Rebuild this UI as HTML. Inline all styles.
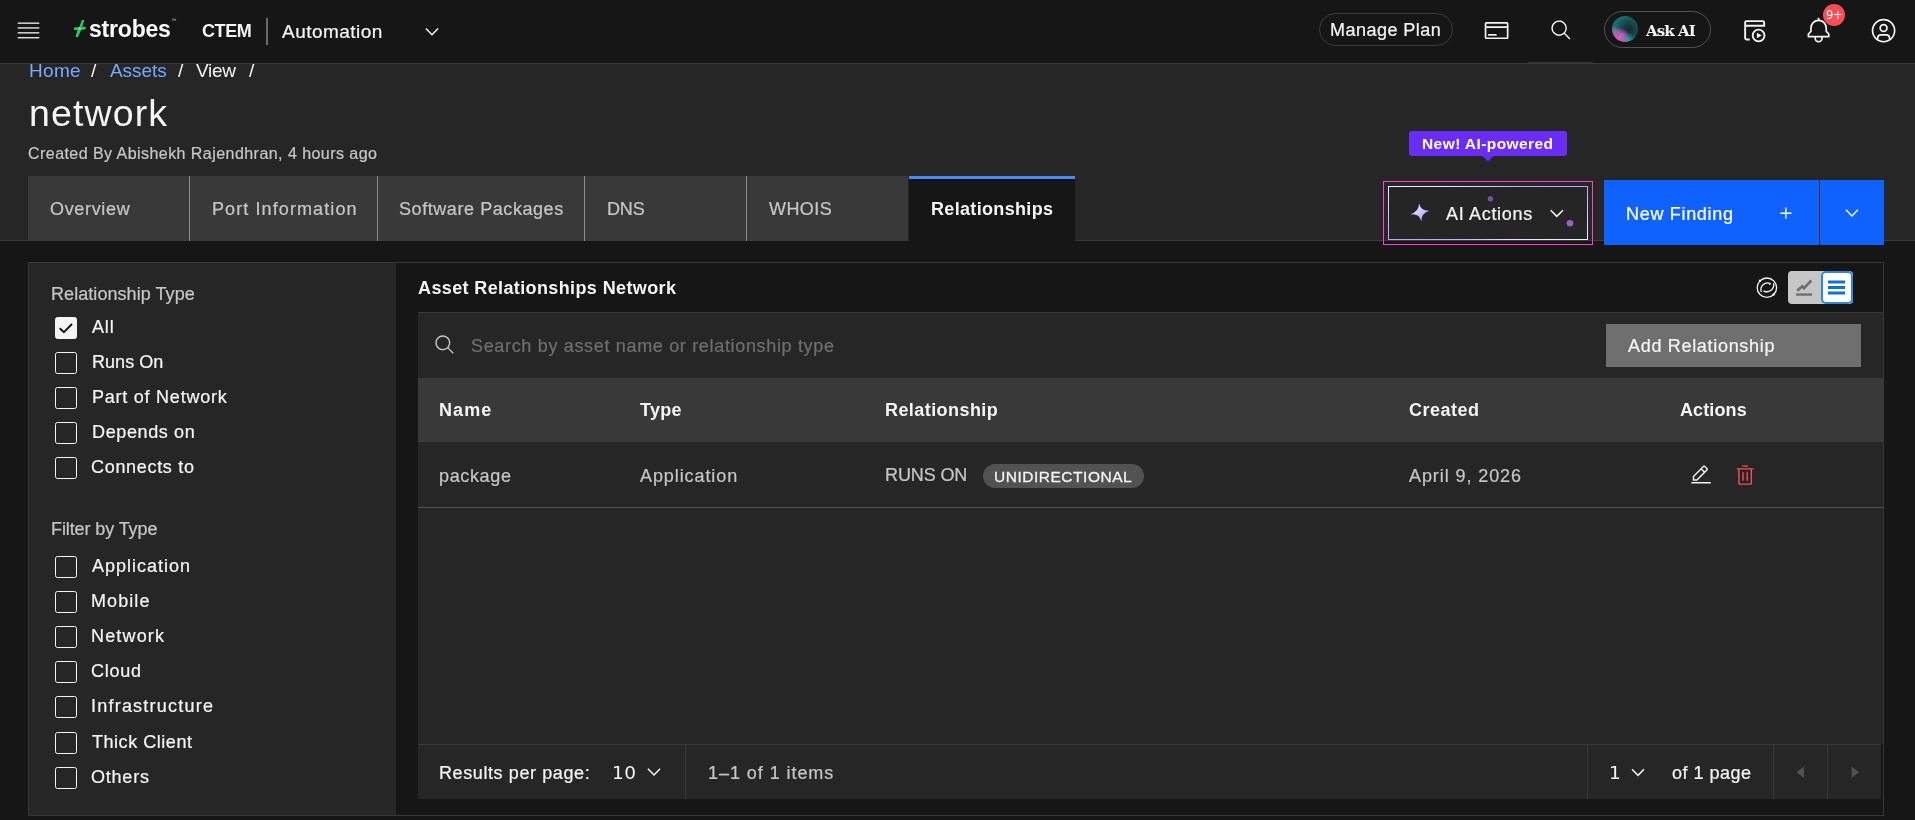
<!DOCTYPE html>
<html lang="en">
<head>
<meta charset="utf-8">
<title>network - Assets - Strobes CTEM</title>
<style>
*{box-sizing:border-box;margin:0;padding:0}
html,body{width:1915px;height:820px;overflow:hidden;background:#161616}
body{position:relative;font-family:"Liberation Sans",sans-serif;color:#f4f4f4}
.a{position:absolute}
.t{position:absolute;white-space:pre;line-height:24px;height:24px;font-family:"Liberation Sans",sans-serif}
svg{position:absolute;overflow:visible}
.s{-webkit-text-stroke:0.22px currentColor}
.cb{position:absolute;left:55px;width:22px;height:22px;border:1px solid #f4f4f4;border-radius:2.5px}
</style>
</head>
<body>
<!-- ===== header ===== -->
<div class="a" style="left:0;top:0;width:1915px;height:63px;background:#161616"></div>
<div class="a" style="left:0;top:63px;width:1915px;height:1px;background:#393939"></div>
<div class="a" style="left:1528px;top:62px;width:65px;height:2px;background:#393939"></div>
<!-- hamburger -->
<svg style="left:0;top:0" width="60" height="62" viewBox="0 0 60 62"><g fill="#f4f4f4"><rect x="17.7" y="22.5" width="21.6" height="1.3"/><rect x="17.7" y="27.3" width="21.6" height="1.3"/><rect x="17.7" y="32.2" width="21.6" height="1.3"/><rect x="17.7" y="37.1" width="21.6" height="1.3"/></g></svg>
<!-- logo bolt -->
<svg style="left:70px;top:16px" width="20" height="26" viewBox="70 16 20 26"><polygon fill="#31c65b" points="81.9,19.87 84.25,20.15 82.19,26.73 85.76,26.92 85.48,29.36 81.15,29.93 77.86,37.26 75.51,36.88 77.49,30.11 73.92,29.93 74.1,27.48 79.37,26.92"/><circle cx="79.6" cy="28.4" r="0.9" fill="#d9ffe3"/></svg>
<div class="t" style="left:171.2px;top:8px;font-size:5px;color:#c6c6c6">™</div>
<!-- divider -->
<div class="a" style="left:266px;top:18px;width:2px;height:27px;background:#6a6a6a"></div>
<!-- chevron automation -->
<svg style="left:420px;top:22px" width="24" height="20" viewBox="420 22 24 20"><polyline points="425.9,28.4 432,34.7 438.1,28.4" fill="none" stroke="#f4f4f4" stroke-width="1.5"/></svg>
<!-- manage plan pill -->
<div class="a" style="left:1319px;top:13px;width:134px;height:33px;border:1px solid #3d3d3d;border-radius:17px"></div>
<!-- purchase icon -->
<svg style="left:1482.9px;top:16.9px" width="27.2" height="27.2" viewBox="0 0 32 32" fill="#f4f4f4"><path d="M28 6H4a2 2 0 00-2 2v16a2 2 0 002 2h24a2 2 0 002-2V8a2 2 0 00-2-2zm0 2v3H4V8zM4 24V13h24v11z"/><path d="M6 20h10v2H6z"/></svg>
<!-- search icon -->
<svg style="left:1549.6px;top:19.2px" width="22.5" height="22.5" viewBox="0 0 32 32" fill="#f4f4f4"><path d="M29 27.586l-7.552-7.552a11.018 11.018 0 10-1.414 1.414L27.586 29zM4 13a9 9 0 119 9 9.01 9.01 0 01-9-9z"/></svg>
<!-- ask ai pill -->
<div class="a" style="left:1604px;top:11px;width:107px;height:37px;border:1px solid #525252;border-radius:19px"></div>
<div class="a" style="left:1611.6px;top:15.6px;width:26.3px;height:26.3px;border-radius:50%;background:radial-gradient(circle at 28% 84%,#cf5fc8 0,#b45cb6 16%,rgba(150,90,170,0) 36%),radial-gradient(circle at 8% 62%,rgba(160,140,165,.8) 0,rgba(160,140,165,0) 22%),radial-gradient(circle at 58% 95%,#22b0b0 0,rgba(31,150,150,0) 30%),radial-gradient(circle at 66% 52%,#16282a 0,#17484a 35%,#176a6a 62%,#178080 100%)"></div>
<!-- calendar/play icon -->
<svg style="left:1740px;top:16px" width="30" height="30" viewBox="1740 16 30 30" fill="none" stroke="#f4f4f4" stroke-width="1.9"><path d="M1749.700 39.500H1746.600a1.450 1.450 0 01-1.450-1.450V22.550a1.450 1.450 0 011.450-1.450H1762.700a1.450 1.450 0 011.450 1.450V25.800H1745.150"/><circle cx="1758.600" cy="35.500" r="5.900"/><path d="M1756.900 32.800V38.300L1761.800 35.550z" fill="#f4f4f4" stroke="none"/></svg>
<!-- bell -->
<svg style="left:1805.05px;top:16.85px" width="27.2" height="27.2" viewBox="0 0 32 32" fill="#f4f4f4"><path d="M28.707 19.293L26 16.586V13a10.014 10.014 0 00-9-9.95V1h-2v2.05A10.014 10.014 0 006 13v3.586l-2.707 2.707A1 1 0 003 20v3a1 1 0 001 1h7v.777a5.152 5.152 0 004.5 5.199A5.006 5.006 0 0021 25v-1h7a1 1 0 001-1v-3a1 1 0 00-.293-.707zM19 25a3 3 0 01-6 0v-1h6zm8-3H5v-1.586l2.707-2.707A1 1 0 008 17v-4a8 8 0 0116 0v4a1 1 0 00.293.707L27 20.414z"/></svg>
<div class="a" style="left:1822.9px;top:3.9px;width:22.2px;height:22.2px;border-radius:50%;background:#fa4d56"></div>
<!-- user avatar -->
<svg style="left:1870px;top:17.3px" width="27.2" height="27.2" viewBox="0 0 32 32" fill="#f4f4f4"><path d="M16 8a5 5 0 105 5 5 5 0 00-5-5zm0 8a3 3 0 113-3 3.003 3.003 0 01-3 3z"/><path d="M16 2a14 14 0 1014 14A14.016 14.016 0 0016 2zm-6 24.377V25a3.003 3.003 0 013-3h6a3.003 3.003 0 013 3v1.377a11.899 11.899 0 01-12 0zm13.993-1.451A5.002 5.002 0 0019 20h-6a5.002 5.002 0 00-4.992 4.926 12 12 0 1115.985 0z"/></svg>

<!-- ===== page header band ===== -->
<div class="a" style="left:0;top:64px;width:1915px;height:177px;background:#262626"></div>
<div class="a" style="left:0;top:240px;width:1915px;height:1px;background:#393939"></div>
<!-- tabs -->
<div class="a" style="left:28px;top:176px;width:880px;height:65px;background:#393939"></div>
<div class="a" style="left:189px;top:176px;width:1px;height:65px;background:#8d8d8d"></div>
<div class="a" style="left:377px;top:176px;width:1px;height:65px;background:#8d8d8d"></div>
<div class="a" style="left:584px;top:176px;width:1px;height:65px;background:#8d8d8d"></div>
<div class="a" style="left:746px;top:176px;width:1px;height:65px;background:#8d8d8d"></div>
<div class="a" style="left:909px;top:176px;width:166px;height:65px;background:#161616;border-top:3px solid #4589ff"></div>
<!-- tooltip -->
<div class="a" style="left:1409px;top:131px;width:158px;height:25px;background:#6a2df5;border-radius:3px"></div>
<svg style="left:1480px;top:155px" width="16" height="8" viewBox="1480 155 16 8"><polygon points="1482,155.5 1494,155.5 1488,161.6" fill="#6a2df5"/></svg>
<!-- AI actions -->
<div class="a" style="left:1383px;top:181px;width:210px;height:64px;border:1px solid #ff3dd9"></div>
<div class="a" style="left:1388px;top:186px;width:200px;height:54px;background:conic-gradient(from 285deg,#f4eeff 0deg,#c3a0fb 150deg,#f4eeff 180deg,#c3a0fb 330deg,#f4eeff 360deg)"></div>
<div class="a" style="left:1389.2px;top:187.2px;width:197.6px;height:51.6px;background:#252525"></div>
<svg style="left:1405px;top:195px" width="180" height="36" viewBox="1405 195 180 36">
<defs><linearGradient id="sp" x1="0" y1="0" x2="1" y2="1"><stop offset="0.15" stop-color="#f1e6ff"/><stop offset="0.85" stop-color="#b59aff"/></linearGradient></defs>
<path fill="url(#sp)" d="M1419 203.500Q1421.100 211.200 1429.600 210.700Q1421.100 213 1421.500 221.600Q1419.300 213 1410.200 214.400Q1419.300 211.200 1419 203.500z"/>
<circle cx="1490.5" cy="198.8" r="2.7" fill="#7a4ea3"/>
<circle cx="1570" cy="223.2" r="3.3" fill="#9860c6"/>
<polyline points="1550.7,210.3 1556.8,216.4 1562.9,210.3" fill="none" stroke="#f4f4f4" stroke-width="1.5"/>
</svg>
<!-- New finding -->
<div class="a" style="left:1604px;top:180px;width:215px;height:65px;background:#0f62fe"></div>
<div class="a" style="left:1820px;top:180px;width:64px;height:65px;background:#0f62fe"></div>
<svg style="left:1775px;top:200px" width="100" height="26" viewBox="1775 200 100 26" fill="none" stroke="#ffffff" stroke-width="1.4"><path d="M1780.3 213.2h11.2M1785.9 207.6v11.2"/><polyline points="1845.9,209.7 1851.9,216 1857.9,209.7"/></svg>

<!-- ===== content panel ===== -->
<div class="a" style="left:28px;top:262px;width:1856px;height:554px;border:1px solid #393939;background:#161616"></div>
<div class="a" style="left:29px;top:263px;width:367px;height:552px;background:#262626"></div>
<!-- checkboxes -->
<div class="cb" style="top:317px;background:#f4f4f4"></div>
<svg style="left:55px;top:317px" width="22" height="22" viewBox="0 0 22 22"><polyline points="4.700,11.200 8.900,15.200 17,7" fill="none" stroke="#161616" stroke-width="2"/></svg>
<div class="cb" style="top:352px"></div>
<div class="cb" style="top:387px"></div>
<div class="cb" style="top:422px"></div>
<div class="cb" style="top:457px"></div>
<div class="cb" style="top:556px"></div>
<div class="cb" style="top:591px"></div>
<div class="cb" style="top:626px"></div>
<div class="cb" style="top:661px"></div>
<div class="cb" style="top:696px"></div>
<div class="cb" style="top:732px"></div>
<div class="cb" style="top:767px"></div>

<!-- main icons top-right -->
<svg style="left:1752px;top:272px" width="30" height="30" viewBox="1752 272 30 30" fill="none" stroke="#f4f4f4" stroke-width="1.3"><circle cx="1766.9" cy="287.7" r="9.7"/><path d="M1761.400 292A6.600 6.600 0 011770.400 283.600M1764.400 291.300A7 7 0 001773.600 283.200"/><g fill="#f4f4f4" stroke="none"><circle cx="1760" cy="280.800" r="1.200"/><circle cx="1773.600" cy="294.400" r="1.200"/><circle cx="1764.200" cy="291.300" r="0.900"/><circle cx="1769.800" cy="284" r="0.900"/></g></svg>
<div class="a" style="left:1788px;top:271px;width:65px;height:33px;background:#c6c6c6;border-radius:4px"></div>
<div class="a" style="left:1820.500px;top:271px;width:32.500px;height:33px;background:#ffffff;border:2px solid #2d86e6;border-radius:5px"></div>
<svg style="left:1790px;top:274px" width="62" height="28" viewBox="1790 274 62 28" fill="none"><polyline points="1797.200,290.600 1802.300,286.300 1804,288.200 1811.400,280.400" stroke="#6f6f6f" stroke-width="2.700"/><path d="M1796.100 294.550h15.900" stroke="#6f6f6f" stroke-width="2.400"/><path d="M1828 282.050h17M1828 287.500h17M1828 293.050h17" stroke="#1170d8" stroke-width="2.900"/></svg>

<!-- toolbar -->
<div class="a" style="left:418px;top:312px;width:1465px;height:66px;background:#262626;border-top:1px solid #393939"></div>
<svg style="left:434.2px;top:334.2px" width="21.8" height="21.8" viewBox="0 0 32 32" fill="#c6c6c6"><path d="M29 27.586l-7.552-7.552a11.018 11.018 0 10-1.414 1.414L27.586 29zM4 13a9 9 0 119 9 9.01 9.01 0 01-9-9z"/></svg>
<div class="a" style="left:1606px;top:324px;width:255px;height:43px;background:#6f6f6f"></div>
<!-- table -->
<div class="a" style="left:418px;top:378px;width:1465px;height:64px;background:#393939"></div>
<div class="a" style="left:418px;top:442px;width:1465px;height:357px;background:#262626"></div>
<div class="a" style="left:418px;top:507px;width:1465px;height:1px;background:#525252"></div>
<div class="a" style="left:983px;top:464px;width:161px;height:24px;background:#525252;border-radius:12px"></div>
<svg style="left:1689.6px;top:463.8px" width="22.2" height="22.2" viewBox="0 0 32 32" fill="#f4f4f4"><path d="M2 26h28v2H2zM25.4 9c.8-.8.8-2 0-2.800l-3.600-3.600c-.8-.8-2-.8-2.800 0l-15 15V24h6.400l15-15zm-5-5L24 7.600l-3 3L17.400 7l3-3zM6 22v-3.600l10-10 3.600 3.600-10 10H6z"/></svg>
<svg style="left:1733.8px;top:463.6px" width="22.2" height="22.2" viewBox="0 0 32 32" fill="#fa4d56"><path d="M12 12h2v12h-2zM18 12h2v12h-2z"/><path d="M4 6v2h2v20a2 2 0 002 2h16a2 2 0 002-2V8h2V6zm4 22V8h16v20zM12 2h8v2h-8z"/></svg>
<!-- pagination -->
<div class="a" style="left:1881px;top:744px;width:2px;height:55px;background:#161616"></div>
<div class="a" style="left:418px;top:744px;width:1463px;height:1px;background:#393939"></div>
<div class="a" style="left:418px;top:799px;width:1465px;height:16px;background:#161616"></div>
<div class="a" style="left:685px;top:745px;width:1px;height:54px;background:#393939"></div>
<div class="a" style="left:1587px;top:745px;width:1px;height:54px;background:#393939"></div>
<div class="a" style="left:1773px;top:745px;width:1px;height:54px;background:#393939"></div>
<div class="a" style="left:1827px;top:745px;width:1px;height:54px;background:#393939"></div>
<svg style="left:640px;top:760px" width="1230" height="24" viewBox="640 760 1230 24"><polyline points="647.900,768.700 654,775 660.100,768.700" fill="none" stroke="#f4f4f4" stroke-width="1.5"/><polyline points="1632,769.300 1638,775.400 1644,769.300" fill="none" stroke="#f4f4f4" stroke-width="1.5"/><polygon points="1804,766.400 1804,778 1796.600,772.200" fill="#525252"/><polygon points="1851.600,766.400 1851.600,778 1859,772.200" fill="#525252"/></svg>

<!-- ===== texts ===== -->
<div class="a" style="left:0;top:0;width:1915px;height:820px;will-change:transform">
<div class="t" style='left:89px;top:17px;font-size:23px;color:#ffffff;font-weight:700;letter-spacing:-0.20px;'>strobes</div>
<div class="t" style='left:202px;top:19px;font-size:18px;color:#f4f4f4;font-weight:700;letter-spacing:-0.43px;'>CTEM</div>
<div class="t s" style='left:282px;top:20px;font-size:19px;color:#f4f4f4;letter-spacing:0.46px;'>Automation</div>
<div class="t s" style='left:1330px;top:18px;font-size:18px;color:#f4f4f4;letter-spacing:0.47px;'>Manage Plan</div>
<div class="t" style='left:1646px;top:19px;font-size:15px;color:#f4f4f4;font-weight:700;letter-spacing:-0.92px;font-family:"DejaVu Serif", "Liberation Serif", serif;'>Ask AI</div>
<div class="t" style='left:1826px;top:3px;font-size:11.5px;color:#ffffff;letter-spacing:-0.30px;font-family:"DejaVu Sans", "Liberation Sans", sans-serif;'>9+</div>
<div class="t" style='left:29px;top:59px;font-size:19px;color:#78a9ff;letter-spacing:0.30px;'>Home</div>
<div class="t" style='left:91px;top:59px;font-size:19px;color:#f4f4f4;'>/</div>
<div class="t" style='left:110px;top:59px;font-size:19px;color:#78a9ff;letter-spacing:-0.06px;'>Assets</div>
<div class="t" style='left:178px;top:59px;font-size:19px;color:#f4f4f4;'>/</div>
<div class="t" style='left:196px;top:59px;font-size:19px;color:#f4f4f4;letter-spacing:-0.30px;'>View</div>
<div class="t" style='left:249px;top:59px;font-size:19px;color:#f4f4f4;'>/</div>
<div class="t" style='left:29px;top:101px;font-size:37.5px;color:#f4f4f4;letter-spacing:1.13px;'>network</div>
<div class="t s" style='left:28px;top:142px;font-size:16px;color:#c6c6c6;letter-spacing:0.45px;'>Created By Abishekh Rajendhran, 4 hours ago</div>
<div class="t s" style='left:50px;top:197px;font-size:18px;color:#c6c6c6;letter-spacing:0.67px;'>Overview</div>
<div class="t s" style='left:212px;top:197px;font-size:18px;color:#c6c6c6;letter-spacing:1.10px;'>Port Information</div>
<div class="t s" style='left:399px;top:197px;font-size:18px;color:#c6c6c6;letter-spacing:0.57px;'>Software Packages</div>
<div class="t s" style='left:607px;top:197px;font-size:18px;color:#c6c6c6;letter-spacing:-0.15px;'>DNS</div>
<div class="t s" style='left:769px;top:197px;font-size:18px;color:#c6c6c6;letter-spacing:0.42px;'>WHOIS</div>
<div class="t" style='left:931px;top:197px;font-size:18px;color:#f4f4f4;font-weight:700;letter-spacing:0.33px;'>Relationships</div>
<div class="t" style='left:1422px;top:132px;font-size:15.5px;color:#ffffff;font-weight:700;letter-spacing:0.42px;'>New! AI-powered</div>
<div class="t s" style='left:1446px;top:202px;font-size:18px;color:#f4f4f4;letter-spacing:0.68px;'>AI Actions</div>
<div class="t s" style='left:1626px;top:202px;font-size:18px;color:#ffffff;letter-spacing:0.69px;'>New Finding</div>
<div class="t s" style='left:51px;top:282px;font-size:18px;color:#c6c6c6;letter-spacing:0.06px;'>Relationship Type</div>
<div class="t s" style='left:92px;top:315px;font-size:18px;color:#f4f4f4;letter-spacing:0.85px;'>All</div>
<div class="t s" style='left:92px;top:350px;font-size:18px;color:#f4f4f4;letter-spacing:0.05px;'>Runs On</div>
<div class="t s" style='left:92px;top:385px;font-size:18px;color:#f4f4f4;letter-spacing:0.76px;'>Part of Network</div>
<div class="t s" style='left:92px;top:420px;font-size:18px;color:#f4f4f4;letter-spacing:0.63px;'>Depends on</div>
<div class="t s" style='left:91px;top:455px;font-size:18px;color:#f4f4f4;letter-spacing:0.69px;'>Connects to</div>
<div class="t s" style='left:51px;top:517px;font-size:18px;color:#c6c6c6;letter-spacing:-0.10px;'>Filter by Type</div>
<div class="t s" style='left:92px;top:554px;font-size:18px;color:#f4f4f4;letter-spacing:0.99px;'>Application</div>
<div class="t s" style='left:91px;top:589px;font-size:18px;color:#f4f4f4;letter-spacing:1.08px;'>Mobile</div>
<div class="t s" style='left:91px;top:624px;font-size:18px;color:#f4f4f4;letter-spacing:1.17px;'>Network</div>
<div class="t s" style='left:91px;top:659px;font-size:18px;color:#f4f4f4;letter-spacing:0.73px;'>Cloud</div>
<div class="t s" style='left:91px;top:694px;font-size:18px;color:#f4f4f4;letter-spacing:1.22px;'>Infrastructure</div>
<div class="t s" style='left:92px;top:730px;font-size:18px;color:#f4f4f4;letter-spacing:0.54px;'>Thick Client</div>
<div class="t s" style='left:91px;top:765px;font-size:18px;color:#f4f4f4;letter-spacing:0.78px;'>Others</div>
<div class="t" style='left:418px;top:276px;font-size:18px;color:#f4f4f4;font-weight:700;letter-spacing:0.38px;'>Asset Relationships Network</div>
<div class="t s" style='left:471px;top:334px;font-size:18px;color:#6f6f6f;letter-spacing:0.67px;'>Search by asset name or relationship type</div>
<div class="t s" style='left:1628px;top:334px;font-size:18px;color:#f4f4f4;letter-spacing:0.69px;'>Add Relationship</div>
<div class="t" style='left:439px;top:398px;font-size:18px;color:#f4f4f4;font-weight:700;letter-spacing:1.10px;'>Name</div>
<div class="t" style='left:640px;top:398px;font-size:18px;color:#f4f4f4;font-weight:700;letter-spacing:0.30px;'>Type</div>
<div class="t" style='left:885px;top:398px;font-size:18px;color:#f4f4f4;font-weight:700;letter-spacing:0.43px;'>Relationship</div>
<div class="t" style='left:1409px;top:398px;font-size:18px;color:#f4f4f4;font-weight:700;letter-spacing:0.48px;'>Created</div>
<div class="t" style='left:1680px;top:398px;font-size:18px;color:#f4f4f4;font-weight:700;letter-spacing:0.12px;'>Actions</div>
<div class="t s" style='left:439px;top:464px;font-size:18px;color:#c6c6c6;letter-spacing:0.65px;'>package</div>
<div class="t s" style='left:640px;top:464px;font-size:18px;color:#c6c6c6;letter-spacing:0.91px;'>Application</div>
<div class="t s" style='left:885px;top:463px;font-size:18px;color:#c6c6c6;letter-spacing:-0.12px;'>RUNS ON</div>
<div class="t s" style='left:994px;top:465px;font-size:15.5px;color:#f4f4f4;letter-spacing:0.52px;-webkit-text-stroke:0.3px #f4f4f4;'>UNIDIRECTIONAL</div>
<div class="t s" style='left:1409px;top:464px;font-size:18px;color:#c6c6c6;letter-spacing:0.91px;'>April 9, 2026</div>
<div class="t s" style='left:439px;top:761px;font-size:18px;color:#f4f4f4;letter-spacing:0.60px;'>Results per page:</div>
<div class="t" style='left:612px;top:761px;font-size:18.5px;color:#f4f4f4;letter-spacing:0.60px;font-family:"DejaVu Sans", "Liberation Sans", sans-serif;'>10</div>
<div class="t s" style='left:708px;top:761px;font-size:18px;color:#c6c6c6;letter-spacing:0.94px;'>1–1 of 1 items</div>
<div class="t" style='left:1609px;top:761px;font-size:18.5px;color:#f4f4f4;font-family:"DejaVu Sans", "Liberation Sans", sans-serif;'>1</div>
<div class="t s" style='left:1672px;top:761px;font-size:18px;color:#f4f4f4;letter-spacing:0.49px;'>of 1 page</div>
</div>
</body>
</html>
